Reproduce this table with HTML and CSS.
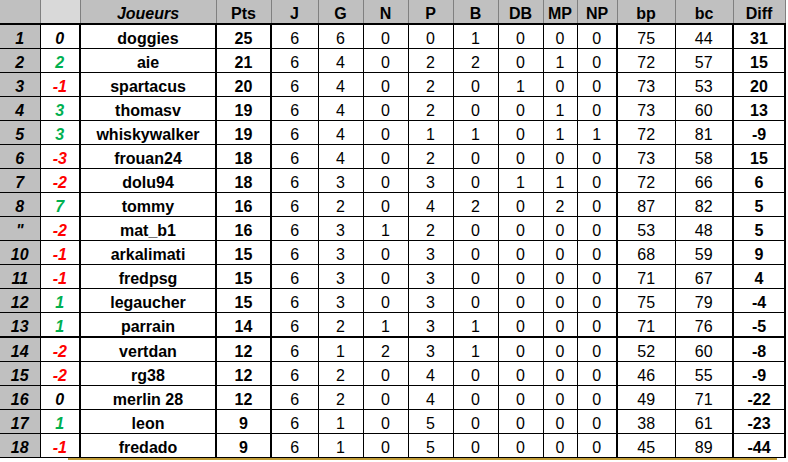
FILE: index.html
```html
<!DOCTYPE html>
<html lang="fr">
<head>
<meta charset="utf-8">
<title>Classement</title>
<link rel="stylesheet" href="styles.css">
</head>
<body>
<table class="standings">
  <colgroup>
    <col class="w-rank"><col class="w-evo"><col class="w-name"><col class="w-pts">
    <col class="w-j"><col class="w-n45"><col class="w-n45"><col class="w-n45"><col class="w-n45"><col class="w-n45">
    <col class="w-mp"><col class="w-np"><col class="w-goal"><col class="w-goal"><col class="w-diff">
  </colgroup>
  <thead>
    <tr>
      <th class="corner"></th><th class="blank"></th><th class="players">Joueurs</th><th>Pts</th>
      <th>J</th><th>G</th><th>N</th><th>P</th><th>B</th><th>DB</th><th>MP</th><th>NP</th><th>bp</th><th>bc</th><th>Diff</th>
    </tr>
  </thead>
  <tbody>
    <tr><td>1</td><td class="even">0</td><td>doggies</td><td>25</td><td>6</td><td>6</td><td>0</td><td>0</td><td>1</td><td>0</td><td>0</td><td>0</td><td>75</td><td>44</td><td>31</td></tr>
    <tr><td>2</td><td class="up">2</td><td>aie</td><td>21</td><td>6</td><td>4</td><td>0</td><td>2</td><td>2</td><td>0</td><td>1</td><td>0</td><td>72</td><td>57</td><td>15</td></tr>
    <tr><td>3</td><td class="down">-1</td><td>spartacus</td><td>20</td><td>6</td><td>4</td><td>0</td><td>2</td><td>0</td><td>1</td><td>0</td><td>0</td><td>73</td><td>53</td><td>20</td></tr>
    <tr><td>4</td><td class="up">3</td><td>thomasv</td><td>19</td><td>6</td><td>4</td><td>0</td><td>2</td><td>0</td><td>0</td><td>1</td><td>0</td><td>73</td><td>60</td><td>13</td></tr>
    <tr><td>5</td><td class="up">3</td><td>whiskywalker</td><td>19</td><td>6</td><td>4</td><td>0</td><td>1</td><td>1</td><td>0</td><td>1</td><td>1</td><td>72</td><td>81</td><td>-9</td></tr>
    <tr><td>6</td><td class="down">-3</td><td>frouan24</td><td>18</td><td>6</td><td>4</td><td>0</td><td>2</td><td>0</td><td>0</td><td>0</td><td>0</td><td>73</td><td>58</td><td>15</td></tr>
    <tr><td>7</td><td class="down">-2</td><td>dolu94</td><td>18</td><td>6</td><td>3</td><td>0</td><td>3</td><td>0</td><td>1</td><td>1</td><td>0</td><td>72</td><td>66</td><td>6</td></tr>
    <tr><td>8</td><td class="up">7</td><td>tommy</td><td>16</td><td>6</td><td>2</td><td>0</td><td>4</td><td>2</td><td>0</td><td>2</td><td>0</td><td>87</td><td>82</td><td>5</td></tr>
    <tr><td>"</td><td class="down">-2</td><td>mat_b1</td><td>16</td><td>6</td><td>3</td><td>1</td><td>2</td><td>0</td><td>0</td><td>0</td><td>0</td><td>53</td><td>48</td><td>5</td></tr>
    <tr><td>10</td><td class="down">-1</td><td>arkalimati</td><td>15</td><td>6</td><td>3</td><td>0</td><td>3</td><td>0</td><td>0</td><td>0</td><td>0</td><td>68</td><td>59</td><td>9</td></tr>
    <tr><td>11</td><td class="down">-1</td><td>fredpsg</td><td>15</td><td>6</td><td>3</td><td>0</td><td>3</td><td>0</td><td>0</td><td>0</td><td>0</td><td>71</td><td>67</td><td>4</td></tr>
    <tr><td>12</td><td class="up">1</td><td>legaucher</td><td>15</td><td>6</td><td>3</td><td>0</td><td>3</td><td>0</td><td>0</td><td>0</td><td>0</td><td>75</td><td>79</td><td>-4</td></tr>
    <tr class="cut"><td>13</td><td class="up">1</td><td>parrain</td><td>14</td><td>6</td><td>2</td><td>1</td><td>3</td><td>1</td><td>0</td><td>0</td><td>0</td><td>71</td><td>76</td><td>-5</td></tr>
    <tr><td>14</td><td class="down">-2</td><td>vertdan</td><td>12</td><td>6</td><td>1</td><td>2</td><td>3</td><td>1</td><td>0</td><td>0</td><td>0</td><td>52</td><td>60</td><td>-8</td></tr>
    <tr><td>15</td><td class="down">-2</td><td>rg38</td><td>12</td><td>6</td><td>2</td><td>0</td><td>4</td><td>0</td><td>0</td><td>0</td><td>0</td><td>46</td><td>55</td><td>-9</td></tr>
    <tr><td>16</td><td class="even">0</td><td>merlin 28</td><td>12</td><td>6</td><td>2</td><td>0</td><td>4</td><td>0</td><td>0</td><td>0</td><td>0</td><td>49</td><td>71</td><td>-22</td></tr>
    <tr><td>17</td><td class="up">1</td><td>leon</td><td>9</td><td>6</td><td>1</td><td>0</td><td>5</td><td>0</td><td>0</td><td>0</td><td>0</td><td>38</td><td>61</td><td>-23</td></tr>
    <tr><td>18</td><td class="down">-1</td><td>fredado</td><td>9</td><td>6</td><td>1</td><td>0</td><td>5</td><td>0</td><td>0</td><td>0</td><td>0</td><td>45</td><td>89</td><td>-44</td></tr>
  </tbody>
</table>
<div class="spill"></div>
</body>
</html>
```

FILE: styles.css
```css
html, body {
  margin: 0;
  padding: 0;
  background: #ffffff;
}

body {
  font-family: "Liberation Sans", Arial, sans-serif;
  color: #000000;
}

.standings {
  border-collapse: collapse;
  table-layout: fixed;
  width: 785px;
}

.w-rank { width: 40px; }
.w-evo { width: 40px; }
.w-name { width: 136px; }
.w-pts { width: 55px; }
.w-j { width: 47px; }
.w-n45 { width: 45px; }
.w-mp { width: 34px; }
.w-np { width: 40px; }
.w-goal { width: 58px; }
.w-diff { width: 52px; }

.standings th,
.standings td {
  padding: 0;
  text-align: center;
  vertical-align: bottom;
  font-size: 16px;
  line-height: 19px;
  white-space: nowrap;
  overflow: hidden;
}

.standings th {
  height: 23px;
  background: #c0c0c0;
  font-weight: bold;
  border-left: 1px solid #808080;
  border-right: 1px solid #808080;
  border-bottom: 2px solid #000000;
  border-top: none;
}

.standings th:first-child { border-left: none; }

.standings th.blank { background: #d9d9d9; }

.standings th.players { font-style: italic; }

.standings td {
  height: 23px;
  border: 1px solid #000000;
  font-weight: normal;
}

.standings td:first-child {
  border-left: none;
  background: #c0c0c0;
  font-weight: bold;
  font-style: italic;
}

.standings td:nth-child(2) {
  font-weight: bold;
  font-style: italic;
}

.standings td:nth-child(3),
.standings td:nth-child(4),
.standings td:nth-child(15) {
  font-weight: bold;
}

.standings td:nth-child(2),
.standings td:nth-child(3),
.standings td:nth-child(4),
.standings td:nth-child(12),
.standings td:nth-child(14),
.standings td:nth-child(15) {
  border-right-width: 2px;
}

.standings tr.cut td {
  border-bottom-width: 2px;
}

.standings td.up { color: #00b050; }
.standings td.down { color: #ff0000; }
.standings td.even { color: #000000; }

.spill {
  margin-left: 68px;
  width: 709px;
  height: 2px;
  background: #bf9a34;
}
```
